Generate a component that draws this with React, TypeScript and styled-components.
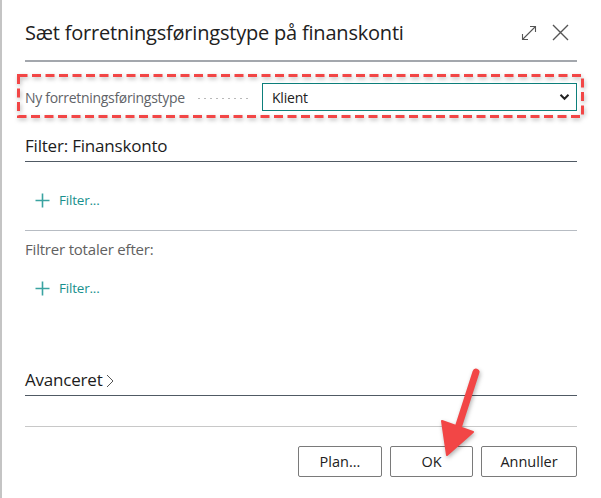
import styled, { createGlobalStyle } from "styled-components";

const GlobalStyle = createGlobalStyle`
  html, body {
    margin: 0;
    padding: 0;
    background: #ffffff;
  }
  body {
    font-family: "Segoe UI", "Open Sans", "Liberation Sans", sans-serif;
    color: #212121;
  }
`

const Dialog = styled.div`
  position: relative;
  width: 601px;
  height: 498px;
  box-sizing: border-box;
  border-left: 2px solid #c4c4c4;
  padding: 0 24px 0 23px;
  background: #fff;
  overflow: hidden;
`

const Header = styled.div`
  height: 62px;
  display: flex;
  align-items: center;
  border-bottom: 2px solid #a3a7ad;
  padding-top: 5px;
  box-sizing: border-box;
`

const Title = styled.h1`
  margin: 0;
  flex: 1;
  font-size: 20px;
  font-weight: 400;
  color: #212121;
  letter-spacing: -0.2px;
`

const IconButton = styled.button`
  border: 0;
  background: transparent;
  padding: 0;
  margin-left: ${(p: { $gap?: number }) => p.$gap ?? 0}px;
  display: flex;
  align-items: center;
  justify-content: center;
  color: #555;
  cursor: pointer;
`

const Annotated = styled.div`
  position: relative;
  margin: 12px -7px 0 -8px;
  padding: 9px 7px 7px 8px;
`

const DashedFrame = styled.svg`
  position: absolute;
  inset: 0;
  width: 100%;
  height: 100%;
  overflow: visible;
  pointer-events: none;
  filter: drop-shadow(1px 2px 2px rgba(0, 0, 0, 0.28));
`

const FieldRow = styled.div`
  display: flex;
  align-items: center;
  height: 28px;
`

const FieldLabel = styled.span`
  font-size: 14px;
  color: #5f6368;
  white-space: nowrap;
  letter-spacing: -0.3px;
`

const Leader = styled.span`
  flex: 1;
  height: 1px;
  margin: 2px 14px 0 11px;
  background-image: radial-gradient(circle, #b9b9b9 0.7px, transparent 0.9px);
  background-size: 6px 1px;
  background-repeat: repeat-x;
`

const SelectBox = styled.div`
  width: 315px;
  height: 28px;
  box-sizing: border-box;
  border: 1px solid #0d7f7b;
  display: flex;
  align-items: center;
  padding: 0 6px 0 9px;
  font-size: 14px;
  color: #212121;
`

const SelectValue = styled.span`
  flex: 1;
  letter-spacing: -0.2px;
`

const SectionTitle = styled.div<{ $top: number }>`
  margin-top: ${(p) => p.$top}px;
  height: 30px;
  line-height: 30px;
  border-bottom: 1px solid #505a64;
  font-size: 17px;
  font-weight: 500;
  color: #1c1c1c;
  display: flex;
  align-items: center;
  letter-spacing: -0.2px;
`

const Chevron = styled.svg`
  margin-left: 3px;
  margin-top: 2px;
`

const FilterLink = styled.div<{ $top: number }>`
  margin-top: ${(p) => p.$top}px;
  height: 20px;
  display: flex;
  align-items: center;
  padding-left: 10px;
  gap: 9px;
  font-size: 13.5px;
  color: #19908d;
  letter-spacing: -0.2px;
`

const Divider = styled.div<{ $top: number; $color: string }>`
  margin-top: ${(p) => p.$top}px;
  height: 1px;
  background: ${(p) => p.$color};
`

const Caption = styled.div`
  margin-top: 8px;
  height: 20px;
  line-height: 20px;
  font-size: 15px;
  color: #616161;
  letter-spacing: -0.2px;
`

const Footer = styled.div`
  margin-top: 19px;
  display: flex;
  justify-content: flex-end;
  gap: 8px;
`

const Button = styled.button<{ $w: number }>`
  width: ${(p) => p.$w}px;
  height: 31px;
  border: 1px solid #7a7a7a;
  border-radius: 2px;
  background: #fff;
  font-family: inherit;
  font-size: 14.5px;
  color: #212121;
  padding: 0;
  cursor: pointer;
`

const ArrowOverlay = styled.svg`
  position: absolute;
  left: 0;
  top: 0;
  pointer-events: none;
  filter: drop-shadow(1px 2px 2px rgba(0, 0, 0, 0.3));
`

const PlusIcon = () => (
  <svg width="15" height="15" viewBox="0 0 15 15">
    <path d="M7.5 0.5v14M0.5 7.5h14" stroke="#3aa3a1" strokeWidth="1.6" fill="none" />
  </svg>
)

const App = () => {
  return (
    <>
      <GlobalStyle />
      <Dialog>
        <Header>
          <Title>Sæt forretningsføringstype på finanskonti</Title>
          <IconButton aria-label="Udvid">
            <svg width="16" height="16" viewBox="0 0 16 16" fill="none" stroke="#555" strokeWidth="1.1">
              <path d="M1.5 14.5L14.5 1.5" />
              <path d="M9 1.5h5.5V7" />
              <path d="M1.5 9v5.5H7" />
            </svg>
          </IconButton>
          <IconButton aria-label="Luk" $gap={15}>
            <svg width="17" height="17" viewBox="0 0 17 17" fill="none" stroke="#555" strokeWidth="1.4">
              <path d="M1 1l15 15M16 1L1 16" />
            </svg>
          </IconButton>
          <span style={{ width: 8 }} />
        </Header>

        <Annotated>
          <DashedFrame preserveAspectRatio="none">
            <rect x="1.5" y="1.5" width="564" height="41" fill="none" stroke="#f24646" strokeWidth="3" strokeDasharray="9 4.5" />
          </DashedFrame>
          <FieldRow>
            <FieldLabel>Ny forretningsføringstype</FieldLabel>
            <Leader />
            <SelectBox>
              <SelectValue>Klient</SelectValue>
              <svg width="11" height="8" viewBox="0 0 11 8">
                <path d="M1.5 1.8l4 4 4-4" stroke="#222" strokeWidth="2" fill="none" />
              </svg>
            </SelectBox>
          </FieldRow>
        </Annotated>

        <SectionTitle $top={13}>Filter: Finanskonto</SectionTitle>
        <FilterLink $top={28}>
          <PlusIcon />
          Filter...
        </FilterLink>
        <Divider $top={20} $color="#b7bcc3" />
        <Caption>Filtrer totaler efter:</Caption>
        <FilterLink $top={19}>
          <PlusIcon />
          Filter...
        </FilterLink>

        <SectionTitle $top={67}>
          Avanceret
          <Chevron width="8" height="14" viewBox="0 0 8 14">
            <path d="M1 1l6 6-6 6" stroke="#555" strokeWidth="1" fill="none" />
          </Chevron>
        </SectionTitle>
        <Divider $top={30} $color="#c8c8c8" />

        <Footer>
          <Button $w={84}>Plan...</Button>
          <Button $w={83}>OK</Button>
          <Button $w={96}>Annuller</Button>
        </Footer>

        <ArrowOverlay width="601" height="498" viewBox="0 0 601 498">
          <path d="M474 372L456 428" stroke="#f24646" strokeWidth="7" strokeLinecap="round" fill="none" />
          <path d="M440 421L471 432L445 455Z" fill="#f24646" stroke="#f24646" strokeWidth="2" strokeLinejoin="round" />
        </ArrowOverlay>
      </Dialog>
    </>
  )
}

export default App
